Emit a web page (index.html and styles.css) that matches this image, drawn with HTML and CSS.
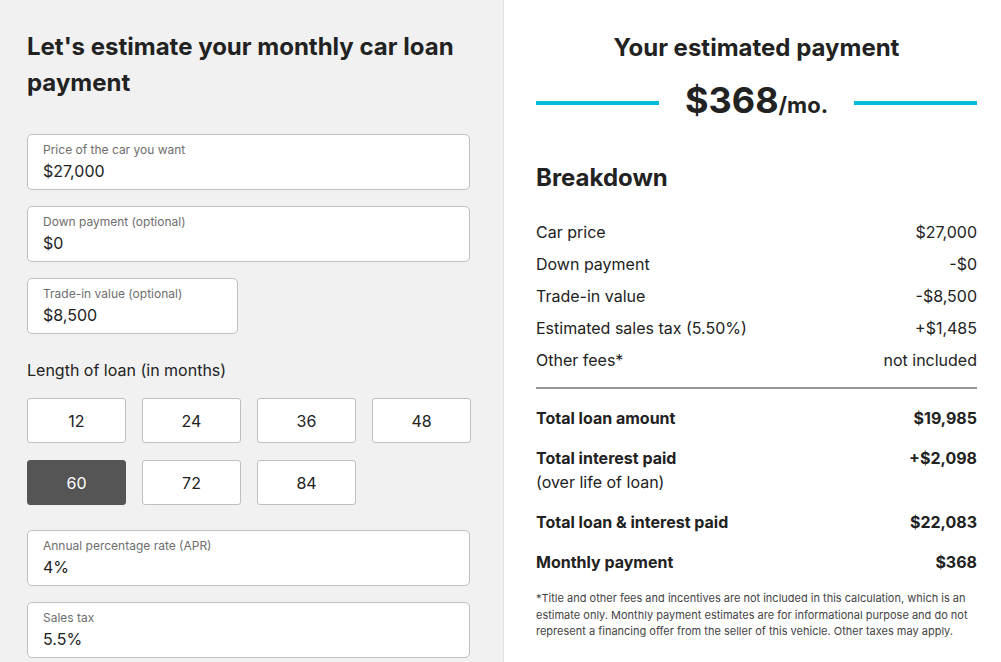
FILE: index.html
```html
<!DOCTYPE html>
<html lang="en">
<head>
    <meta charset="UTF-8">
    <meta name="viewport" content="width=device-width, initial-scale=1.0">
    <title>Car Loan Calculator</title>
    <link rel="stylesheet" href="styles.css">
</head>
<body>
    <div class="calculator">
        <!-- Inputs -->
        <div class="inputs-panel">
            <h1 class="panel-title">Let's estimate your monthly car loan payment</h1>

            <div class="field">
                <label class="field-label">Price of the car you want</label>
                <div class="field-value">$27,000</div>
            </div>

            <div class="field">
                <label class="field-label">Down payment (optional)</label>
                <div class="field-value">$0</div>
            </div>

            <div class="field field-half">
                <label class="field-label">Trade-in value (optional)</label>
                <div class="field-value">$8,500</div>
            </div>

            <div class="term-label">Length of loan (in months)</div>
            <div class="term-buttons">
                <button class="term-btn">12</button>
                <button class="term-btn">24</button>
                <button class="term-btn">36</button>
                <button class="term-btn">48</button>
                <button class="term-btn active">60</button>
                <button class="term-btn">72</button>
                <button class="term-btn">84</button>
            </div>

            <div class="field">
                <label class="field-label">Annual percentage rate (APR)</label>
                <div class="field-value">4%</div>
            </div>

            <div class="field">
                <label class="field-label">Sales tax</label>
                <div class="field-value">5.5%</div>
            </div>
        </div>

        <!-- Results -->
        <div class="results-panel">
            <h2 class="result-title">Your estimated payment</h2>
            <div class="payment">
                <span class="payment-line"></span>
                <span class="payment-amount">$368<small>/mo.</small></span>
                <span class="payment-line"></span>
            </div>

            <h3 class="breakdown-title">Breakdown</h3>
            <div class="breakdown">
                <div class="row"><span>Car price</span><span>$27,000</span></div>
                <div class="row"><span>Down payment</span><span>-$0</span></div>
                <div class="row"><span>Trade-in value</span><span>-$8,500</span></div>
                <div class="row"><span>Estimated sales tax (5.50%)</span><span>+$1,485</span></div>
                <div class="row"><span>Other fees*</span><span>not included</span></div>
            </div>

            <div class="totals">
                <div class="total-row"><span>Total loan amount</span><span>$19,985</span></div>
                <div class="total-row">
                    <div>Total interest paid<div class="total-note">(over life of loan)</div></div>
                    <span>+$2,098</span>
                </div>
                <div class="total-row"><span>Total loan &amp; interest paid</span><span>$22,083</span></div>
                <div class="total-row"><span>Monthly payment</span><span>$368</span></div>
            </div>

            <p class="disclaimer">*Title and other fees and incentives are not included in this calculation, which is an estimate only. Monthly payment estimates are for informational purpose and do not represent a financing offer from the seller of this vehicle. Other taxes may apply.</p>
        </div>
    </div>
</body>
</html>
```

FILE: styles.css
```css
* {
    margin: 0;
    padding: 0;
    box-sizing: border-box;
}

body {
    font-family: Inter, 'Noto Sans', sans-serif;
    color: #222;
    background: #fff;
    height: 662px;
    overflow: hidden;
}

.calculator {
    display: flex;
    height: 100%;
}

/* Inputs panel */
.inputs-panel {
    width: 504px;
    flex-shrink: 0;
    background: #f1f1f1;
    border-right: 1px solid #e2e2e2;
    padding: 29px 33px 0 27px;
}

.panel-title {
    font-size: 24px;
    font-weight: 700;
    line-height: 36px;
    margin-bottom: 33px;
}

.field {
    background: #fff;
    border: 1px solid #bfbfbf;
    border-radius: 5px;
    height: 56px;
    padding: 7px 15px 0;
    margin-bottom: 16px;
}

.field-half {
    width: 211px;
}

.field-label {
    display: block;
    font-size: 12px;
    line-height: 16px;
    color: #6e6e6e;
}

.field-value {
    font-size: 16px;
    line-height: 24px;
    margin-top: 1px;
}

.term-label {
    font-size: 16px;
    line-height: 24px;
    margin-top: 24px;
}

.term-buttons {
    display: grid;
    grid-template-columns: repeat(4, 99px);
    gap: 17px 16px;
    margin: 16px 0 25px;
}

.term-btn {
    height: 45px;
    background: #fff;
    border: 1px solid #bfbfbf;
    border-radius: 3px;
    font-family: inherit;
    font-size: 16px;
    color: #222;
}

.term-btn.active {
    background: #555;
    border-color: #555;
    color: #fff;
}

/* Results panel */
.results-panel {
    flex: 1;
    padding: 33px 24px 0 32px;
}

.result-title {
    font-size: 24px;
    font-weight: 700;
    line-height: 30px;
    text-align: center;
}

.payment {
    display: flex;
    align-items: center;
    margin-top: 14px;
}

.payment-line {
    flex: 1;
    height: 4px;
    background: #00bcd9;
}

.payment-amount {
    padding: 0 26px;
    font-size: 36px;
    font-weight: 700;
    line-height: 46px;
}

.payment-amount small {
    font-size: 22px;
}

.breakdown-title {
    font-size: 24px;
    font-weight: 700;
    line-height: 30px;
    margin-top: 35px;
}

.breakdown {
    margin-top: 23px;
    padding-bottom: 11px;
    border-bottom: 2px solid #999;
}

.row {
    display: flex;
    justify-content: space-between;
    font-size: 16px;
    line-height: 32px;
}

.totals {
    padding-top: 17px;
}

.total-row {
    display: flex;
    justify-content: space-between;
    font-size: 16px;
    font-weight: 700;
    line-height: 24px;
    margin-bottom: 16px;
}

.total-note {
    font-weight: 400;
}

.disclaimer {
    font-size: 11px;
    line-height: 16.5px;
    color: #444;
    margin-top: 1px;
}
```
